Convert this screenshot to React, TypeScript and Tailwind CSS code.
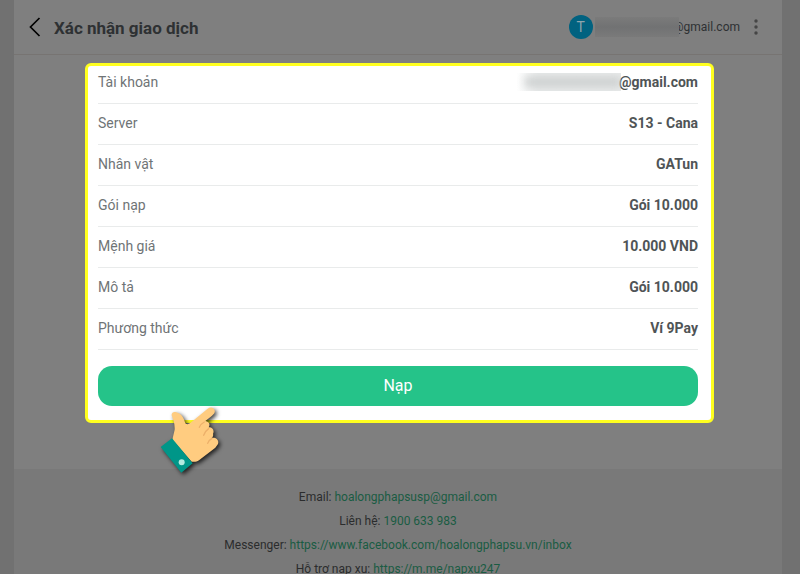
import React from 'react';

interface DetailRow {
    label: string;
    value: string;
    masked?: boolean;
}

const DETAILS: DetailRow[] = [
    { label: 'Tài khoản', value: '@gmail.com', masked: true },
    { label: 'Server', value: 'S13 - Cana' },
    { label: 'Nhân vật', value: 'GATun' },
    { label: 'Gói nạp', value: 'Gói 10.000' },
    { label: 'Mệnh giá', value: '10.000 VND' },
    { label: 'Mô tả', value: 'Gói 10.000' },
    { label: 'Phương thức', value: 'Ví 9Pay' },
];

const CONTACTS = [
    { label: 'Email:', text: 'hoalongphapsusp@gmail.com', href: 'mailto:hoalongphapsusp@gmail.com' },
    { label: 'Liên hệ:', text: '1900 633 983', href: 'tel:1900633983' },
    { label: 'Messenger:', text: 'https://www.facebook.com/hoalongphapsu.vn/inbox', href: 'https://www.facebook.com/hoalongphapsu.vn/inbox' },
    { label: 'Hỗ trợ nạp xu:', text: 'https://m.me/napxu247', href: 'https://m.me/napxu247' },
];

const PointerHand: React.FC<{ className?: string }> = ({ className }) => (
    <svg className={className} viewBox="57 165 198 216" aria-hidden="true">
        <path
            d="M95 196C94 188 101 184 109 187C117 190 124 194 128 201C132 207 134 213 136 220C141 224 146 223 151 219L203 176C214 168 227 176 224 187C223 191 220 194 216 197L196 213C206 214 212 222 206 232C217 231 224 240 219 252C221 256 218 261 215 264C227 261 238 270 234 282L226 293L177 331C170 336 163 336 155 335L97 269L104 239C105 221 99 207 95 196Z"
            fill="#FFCC80"
        />
        <path
            d="M178 232C182 223 187 219 193 216M191 256C194 247 200 240 206 236M203 280C205 273 210 268 216 265"
            fill="none"
            stroke="#EDB06A"
            strokeWidth="4"
            strokeLinecap="round"
        />
        <path d="M62 291L96 265L158 340L124 368Z" fill="#009688" />
        <circle cx="125" cy="337" r="9" fill="#B2EBE0" />
    </svg>
);

const Header: React.FC = () => (
    <header className="flex h-[55px] items-center justify-between border-b border-[#777472] pl-[14px] pr-[22px]">
        <div className="flex items-center gap-3">
            <button type="button" aria-label="Quay lại" className="text-black">
                <svg className="h-5 w-[14px]" viewBox="0 0 14 20" fill="none" stroke="currentColor" strokeWidth="1.7">
                    <path d="M11.5 1L2.5 10L11.5 19" />
                </svg>
            </button>
            <h1 className="pt-1 text-[17px] font-bold text-[#2e3133]">Xác nhận giao dịch</h1>
        </div>
        <div className="flex items-center">
            <span className="flex size-6 items-center justify-center rounded-full bg-[#016280] text-sm text-[#8fa5ad]">T</span>
            <span className="z-10 ml-[2px] h-5 w-[84px] bg-linear-to-b from-[#7b7b7b] via-[#717273] to-[#7a7a7a]" />
            <span className="-ml-1.5 text-xs text-[#2e3133]">@gmail.com</span>
            <button type="button" aria-label="Menu" className="ml-3 text-[#454545]">
                <svg className="h-4 w-2" viewBox="0 0 8 16" fill="currentColor">
                    <circle cx="4" cy="2" r="1.7" />
                    <circle cx="4" cy="8" r="1.7" />
                    <circle cx="4" cy="14" r="1.7" />
                </svg>
            </button>
        </div>
    </header>
);

const ConfirmCard: React.FC = () => (
    <section className="relative rounded-md border-[3px] border-[#ffff1f] bg-white pb-[14px] pl-[10px] pr-[13px]">
        <dl className="text-sm">
            {DETAILS.map((row, i) => (
                <div
                    key={row.label}
                    className={`flex items-center justify-between border-b border-[#e9ebeb] ${i === 0 ? 'h-[38px] pb-1.5' : 'h-[41px] pb-0.5'}`}
                >
                    <dt className="text-[#6f7476]">{row.label}</dt>
                    <dd className="flex items-center font-bold text-[#4f5456]">
                        {row.masked && (
                            <span className="flex h-[18px] w-[104px] items-center overflow-hidden bg-linear-to-r from-white to-[#e9ebeb] to-20%">
                                <span className="ml-2 h-2.5 w-full bg-[#cccfcf] blur-xs" />
                            </span>
                        )}
                        <span className={row.masked ? '-ml-[2px]' : ''}>{row.value}</span>
                    </dd>
                </div>
            ))}
        </dl>
        <button type="button" className="mt-4 h-10 w-full rounded-[14px] bg-[#25c389] text-base text-white">
            Nạp
        </button>
        <PointerHand className="absolute left-[71px] top-[339px] h-[72px] w-[66px] drop-shadow-[2px_2px_2px_rgba(0,0,0,0.75)]" />
    </section>
);

const Footer: React.FC = () => (
    <footer className="grow bg-[#797979] pt-4 text-center text-xs leading-6 text-[#2b2c2d]">
        {CONTACTS.map((c) => (
            <p key={c.label}>
                {c.label}{' '}
                <a href={c.href} className="text-[#1a5c43]">
                    {c.text}
                </a>
            </p>
        ))}
    </footer>
);

const App: React.FC = () => {
    return (
        <div className="h-screen overflow-hidden bg-[#717171] pl-[14px] pr-[18px] font-[Roboto,sans-serif]">
            <div className="flex min-h-full flex-col bg-[#7f7f7f]">
                <Header />
                <main className="pb-[46px] pl-[71px] pr-[68px] pt-2">
                    <ConfirmCard />
                </main>
                <Footer />
            </div>
        </div>
    );
};

export default App;
